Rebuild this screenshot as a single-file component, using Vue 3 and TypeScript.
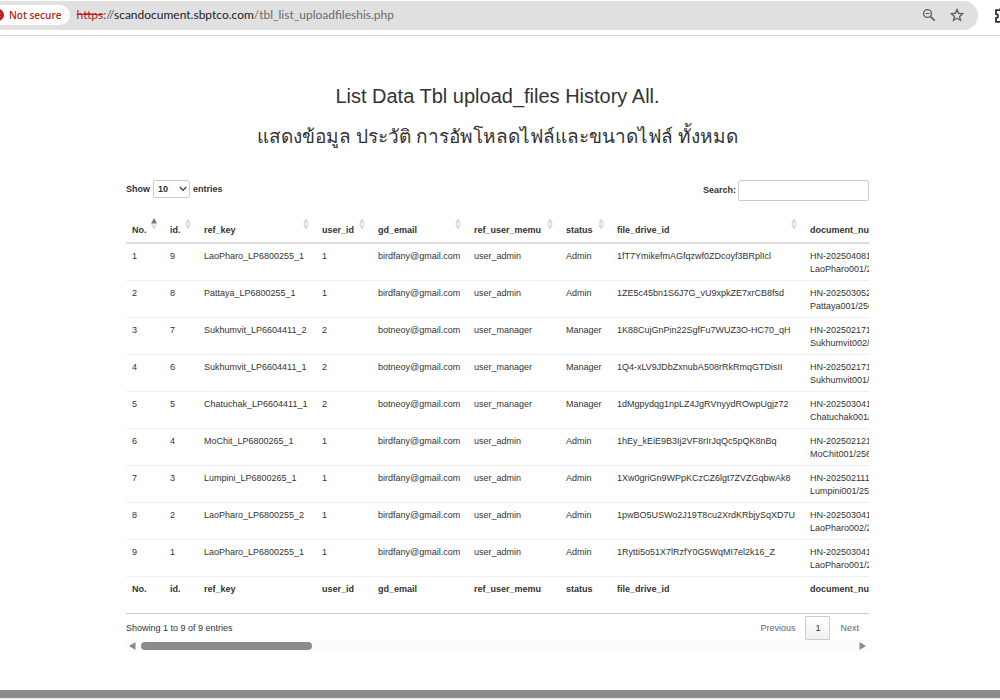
<script setup lang="ts">
import { ref } from 'vue'

interface UploadRow {
  id: number
  refKey: string
  userId: number
  email: string
  menu: string
  status: string
  driveId: string
  doc: [string, string]
}

const headings: string[] = ['No.', 'id.', 'ref_key', 'user_id', 'gd_email', 'ref_user_memu', 'status', 'file_drive_id', 'document_number']

const rows: UploadRow[] = [
  { id: 9, refKey: 'LaoPharo_LP6800255_1', userId: 1, email: 'birdfany@gmail.com', menu: 'user_admin', status: 'Admin', driveId: '1fT7YmikefmAGfqzwf0ZDcoyf3BRplIcl', doc: ['HN-202504081', 'LaoPharo001/2568'] },
  { id: 8, refKey: 'Pattaya_LP6800255_1', userId: 1, email: 'birdfany@gmail.com', menu: 'user_admin', status: 'Admin', driveId: '1ZE5c45bn1S6J7G_vU9xpkZE7xrCB8fsd', doc: ['HN-202503052', 'Pattaya001/2568'] },
  { id: 7, refKey: 'Sukhumvit_LP6604411_2', userId: 2, email: 'botneoy@gmail.com', menu: 'user_manager', status: 'Manager', driveId: '1K88CujGnPin22SgfFu7WUZ3O-HC70_qH', doc: ['HN-202502171', 'Sukhumvit002/2568'] },
  { id: 6, refKey: 'Sukhumvit_LP6604411_1', userId: 2, email: 'botneoy@gmail.com', menu: 'user_manager', status: 'Manager', driveId: '1Q4-xLV9JDbZxnubA508rRkRmqGTDisII', doc: ['HN-202502171', 'Sukhumvit001/2568'] },
  { id: 5, refKey: 'Chatuchak_LP6604411_1', userId: 2, email: 'botneoy@gmail.com', menu: 'user_manager', status: 'Manager', driveId: '1dMgpydqg1npLZ4JgRVnyydROwpUgjz72', doc: ['HN-202503041', 'Chatuchak001/2568'] },
  { id: 4, refKey: 'MoChit_LP6800265_1', userId: 1, email: 'birdfany@gmail.com', menu: 'user_admin', status: 'Admin', driveId: '1hEy_kEiE9B3Ij2VF8rIrJqQc5pQK8nBq', doc: ['HN-202502121', 'MoChit001/2568'] },
  { id: 3, refKey: 'Lumpini_LP6800265_1', userId: 1, email: 'birdfany@gmail.com', menu: 'user_admin', status: 'Admin', driveId: '1Xw0griGn9WPpKCzCZ6lgt7ZVZGqbwAk8', doc: ['HN-202502111', 'Lumpini001/2568'] },
  { id: 2, refKey: 'LaoPharo_LP6800255_2', userId: 1, email: 'birdfany@gmail.com', menu: 'user_admin', status: 'Admin', driveId: '1pwBO5USWo2J19T8cu2XrdKRbjySqXD7U', doc: ['HN-202503041', 'LaoPharo002/2568'] },
  { id: 1, refKey: 'LaoPharo_LP6800255_1', userId: 1, email: 'birdfany@gmail.com', menu: 'user_admin', status: 'Admin', driveId: '1Rytti5o51X7lRzfY0G5WqMI7el2k16_Z', doc: ['HN-202503041', 'LaoPharo001/2568'] },
]

const pageSize = ref('10')
const query = ref('')
</script>

<template>
  <div class="page">
    <header class="toolbar">
      <div class="omnibox">
        <button class="security" type="button">
          <svg class="warn" viewBox="0 0 12 12" aria-hidden="true">
            <circle cx="6" cy="6" r="6" fill="#b3261e" />
            <path d="M4 4l4 4M8 4l-4 4" stroke="#fff" stroke-width="1.4" />
          </svg>
          <span>Not secure</span>
        </button>
        <a class="url" href="#"><s>https</s><span class="sep">://</span><span class="host">scandocument.sbptco.com</span>/tbl_list_uploadfileshis.php</a>
        <button class="icon" type="button" aria-label="Zoom">
          <svg viewBox="0 0 14 14" fill="none" stroke="#5f6368" aria-hidden="true">
            <circle cx="5.5" cy="5.5" r="3.9" stroke-width="1.4" />
            <path d="M8.4 8.4l4.3 4.3" stroke-width="1.7" />
            <path d="M3.6 5.5h3.8" stroke-width="1.1" />
          </svg>
        </button>
        <button class="icon" type="button" aria-label="Bookmark">
          <svg viewBox="0 0 14 14" fill="none" stroke="#5f6368" stroke-width="1.4" aria-hidden="true">
            <path d="M7 1.6l1.6 3.7 4 .4-3 2.7.9 3.9L7 10.2l-3.5 2.1.9-3.9-3-2.7 4-.4z" />
          </svg>
        </button>
      </div>
      <button class="ext" type="button" aria-label="Extensions">
        <svg viewBox="0 0 14 14" fill="none" stroke="#333" stroke-width="1.6" aria-hidden="true">
          <path d="M1.8 2.8h3.4a1.6 1.6 0 0 1 3.2 0h3v3.4a1.6 1.6 0 0 1 0 3.2v3.6H1.8V9.6a1.7 1.7 0 0 0 0-3.4z" />
        </svg>
      </button>
    </header>

    <main class="content">
      <h1>List Data Tbl upload_files History All.</h1>
      <h2 lang="th">แสดงข้อมูล ประวัติ การอัพโหลดไฟล์และขนาดไฟล์ ทั้งหมด</h2>

      <div class="controls">
        <label class="length">
          Show
          <span class="select">
            <select v-model="pageSize">
              <option>10</option>
              <option>25</option>
              <option>50</option>
              <option>100</option>
            </select>
            <svg viewBox="0 0 8 6" fill="none" stroke="#333" stroke-width="1.2" aria-hidden="true"><path d="M.8 1L4 4.4 7.2 1" /></svg>
          </span>
          entries
        </label>
        <label class="search">Search:<input v-model="query" type="search" /></label>
      </div>

      <div class="viewport">
        <table>
          <colgroup>
            <col v-for="(h, i) in headings" :key="h" :class="'c' + i" />
          </colgroup>
          <thead>
            <tr>
              <th v-for="(h, i) in headings" :key="h" scope="col">
                {{ h }}
                <svg class="sort" :class="{ asc: i === 0 }" viewBox="0 0 6 12" aria-hidden="true">
                  <path class="up" d="M3 0l3 5.6H0z" />
                  <path class="down" d="M3 12L0 6.4h6z" />
                </svg>
              </th>
            </tr>
          </thead>
          <tbody>
            <tr v-for="(r, i) in rows" :key="r.id">
              <td>{{ i + 1 }}</td>
              <td>{{ r.id }}</td>
              <td>{{ r.refKey }}</td>
              <td>{{ r.userId }}</td>
              <td>{{ r.email }}</td>
              <td>{{ r.menu }}</td>
              <td>{{ r.status }}</td>
              <td>{{ r.driveId }}</td>
              <td>{{ r.doc[0] }}<br />{{ r.doc[1] }}</td>
            </tr>
          </tbody>
          <tfoot>
            <tr>
              <th v-for="h in headings" :key="h">{{ h }}</th>
            </tr>
          </tfoot>
        </table>
      </div>

      <div class="footer">
        <span>Showing 1 to 9 of 9 entries</span>
        <nav class="pager">
          <button type="button">Previous</button>
          <button type="button" class="current">1</button>
          <button type="button">Next</button>
        </nav>
      </div>

      <div class="scroller">
        <svg viewBox="0 0 7 8" aria-hidden="true"><path d="M6.5 0v8L0 4z" /></svg>
        <div class="track"><div class="thumb"></div></div>
        <svg viewBox="0 0 7 8" aria-hidden="true"><path d="M.5 0v8L7 4z" /></svg>
      </div>
    </main>

    <div class="bottom-bar"></div>
  </div>
</template>

<style>
body {
  background: #fff;
}
</style>

<style scoped>
.page {
  display: flex;
  flex-direction: column;
  min-height: 100vh;
  overflow: hidden;
  font-family: "Liberation Sans", Arial, sans-serif;
  font-size: 9px;
  line-height: 13px;
  color: #333;
}
.page * {
  box-sizing: border-box;
}
button {
  border: 0;
  padding: 0;
  background: none;
  font: inherit;
  color: inherit;
}
svg {
  display: block;
  flex: none;
}
.toolbar {
  display: flex;
  align-items: flex-start;
  height: 36px;
  padding-top: 1px;
  border-bottom: 1px solid #d3d3d3;
  font-family: "Open Sans", "Noto Sans", sans-serif;
  overflow: hidden;
}
.omnibox {
  display: flex;
  align-items: center;
  flex: 1;
  height: 29px;
  padding: 0 14px 1px 0;
  border-radius: 0 15px 15px 0;
  background: #e0e0e0;
}
.security {
  display: flex;
  align-items: center;
  gap: 5px;
  height: 20px;
  margin-left: -8px;
  padding-right: 8px;
  border-radius: 0 10px 10px 0;
  background: #fff;
  font-size: 10px;
  font-weight: 600;
  color: #b3261e;
}
.warn {
  width: 12px;
  height: 12px;
}
.url {
  flex: 1;
  margin-left: 7px;
  font-family: Lato, "Open Sans", sans-serif;
  font-size: 12px;
  line-height: 16px;
  color: #6b6b6b;
  text-decoration: none;
}
.url s {
  color: #b3261e;
}
.sep {
  color: #555;
}
.host {
  color: #222;
}
.icon {
  margin-left: 14px;
}
.icon svg {
  width: 14px;
  height: 14px;
}
.ext {
  width: 6px;
  margin: 6px 0 0 16px;
}
.ext svg {
  width: 16px;
  height: 16px;
}
.content {
  margin: 0 131px 0 126px;
}
h1,
h2 {
  margin: 0;
  text-align: center;
  font-weight: 400;
  color: #333;
}
h1 {
  margin-top: 48px;
  font-size: 20px;
  line-height: 24px;
}
h2 {
  margin-top: 16px;
  font-size: 19px;
  line-height: 26px;
}
.controls {
  display: flex;
  justify-content: space-between;
  align-items: flex-start;
  margin-top: 30px;
  font-weight: 700;
}
.length {
  display: flex;
  align-items: center;
  gap: 3px;
}
.select {
  position: relative;
}
select {
  display: block;
  appearance: none;
  width: 37px;
  height: 18px;
  padding: 0 4px;
  border: 1px solid #ccc;
  border-radius: 2px;
  background: #fff;
  font: inherit;
  color: inherit;
}
.select svg {
  position: absolute;
  right: 3px;
  top: 6px;
  width: 8px;
  height: 6px;
  pointer-events: none;
}
.search {
  display: flex;
  align-items: center;
  gap: 2px;
}
.search input {
  width: 131px;
  height: 21px;
  padding: 0 4px;
  border: 1px solid #ccc;
  border-radius: 2px;
  background: #fff;
  font: inherit;
  outline: none;
}
.viewport {
  margin-top: 11px;
  overflow: hidden;
}
table {
  table-layout: fixed;
  width: 900px;
  border-collapse: separate;
  border-spacing: 0;
}
.c0 { width: 38px; }
.c1 { width: 34px; }
.c2 { width: 118px; }
.c3 { width: 56px; }
.c4 { width: 96px; }
.c5 { width: 92px; }
.c6 { width: 51px; }
.c7 { width: 193px; }
th,
td {
  padding: 6px 0 4px 6px;
  text-align: left;
  vertical-align: top;
  white-space: nowrap;
}
thead th {
  position: relative;
  padding: 12px 0 5px 6px;
  border-bottom: 2px solid #ddd;
}
.sort {
  position: absolute;
  top: 6px;
  right: 7px;
  width: 6px;
  height: 12px;
  fill: #ddd;
}
.asc .up {
  fill: #777;
}
tbody td {
  height: 37px;
  border-bottom: 1px solid #eee;
}
tfoot th {
  height: 37px;
  border-bottom: 1px solid #ccc;
}
.footer {
  display: flex;
  justify-content: space-between;
  align-items: center;
  height: 24px;
  margin-top: 2px;
}
.pager {
  display: flex;
  align-items: center;
  color: #666;
}
.pager button {
  padding: 0 10px;
}
.pager .current {
  height: 24px;
  padding: 0 9px;
  border: 1px solid #ccc;
  border-radius: 1px;
  background: linear-gradient(#fff, #f0f0f0);
  color: #333;
}
.scroller {
  display: flex;
  align-items: center;
  gap: 5px;
  height: 12px;
  padding: 0 3px;
  background: #fcfcfc;
  fill: #8b8b8b;
}
.scroller svg {
  width: 7px;
  height: 8px;
}
.track {
  flex: 1;
}
.thumb {
  width: 24%;
  height: 8px;
  border-radius: 4px;
  background: #8b8b8b;
}
.bottom-bar {
  height: 8px;
  margin: auto 0 2px;
  background: #8b8b8b;
  box-shadow: 0 1px #e5e5e5;
}
</style>
